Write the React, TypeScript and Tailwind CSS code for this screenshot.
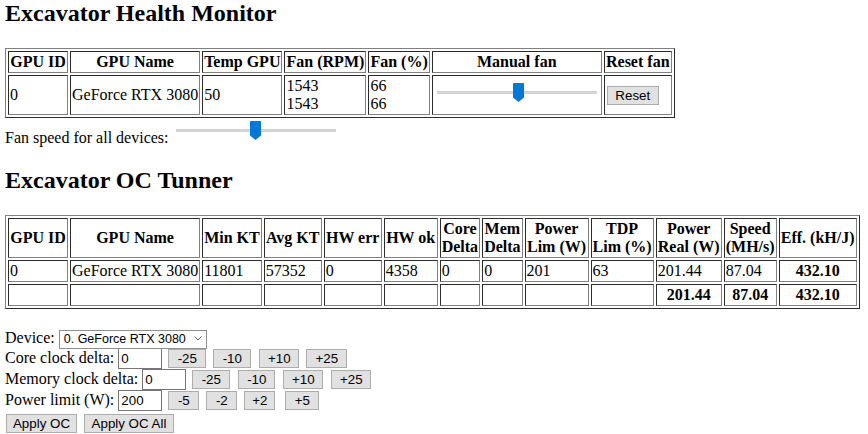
import type { ReactNode } from 'react';

const tableCls = 'border-separate border-spacing-[2px] border border-[grey] [border-style:outset]';
const thCls = 'border border-[grey] [border-style:inset] p-px font-bold text-center align-middle whitespace-nowrap';
const tdCls = 'border border-[grey] [border-style:inset] p-px text-left align-middle whitespace-nowrap';
const sans = "font-['Liberation_Sans',Arial,sans-serif] text-[13.33px] leading-[15px] text-black";

function Slider({ left }: { left: number }) {
  return (
    <div className="relative h-[19px] w-[160px]">
      <div className="absolute left-0 right-0 top-[8px] h-[3px] bg-[#d9d9d9] border-y border-[#cfcfcf]" />
      <svg className="absolute top-0" style={{ left }} width="11" height="19" viewBox="0 0 11 19">
        <path d="M1 0H10Q11 0 11 1V14.5L5.5 19L0 14.5V1Q0 0 1 0Z" fill="#0078d7" />
      </svg>
    </div>
  );
}

function Btn({ className, children }: { className?: string; children: ReactNode }) {
  return (
    <button
      type="button"
      className={`h-[19px] shrink-0 border border-[#adadad] bg-[#e1e1e1] text-center ${sans} ${className ?? ''}`}
    >
      {children}
    </button>
  );
}

function NumInput({ value, className }: { value: string; className?: string }) {
  return (
    <input
      type="text"
      readOnly
      value={value}
      className={`h-[21px] w-[44px] shrink-0 border border-[#767676] bg-white pl-[2px] ${sans} ${className ?? ''}`}
    />
  );
}

export default function App() {
  return (
    <div className="min-h-[434px] w-[868px] bg-white px-[5px] font-['Liberation_Serif','Times_New_Roman',serif] text-[16px] leading-[18px] text-black">
      {/* Health monitor */}
      <h2 className="mb-[21px] text-[24px] font-bold leading-[27px]">Excavator Health Monitor</h2>

      <table className={tableCls}>
        <thead>
          <tr>
            <th className={`${thCls} w-[60px]`}>GPU ID</th>
            <th className={`${thCls} w-[130px]`}>GPU Name</th>
            <th className={`${thCls} w-[80px]`}>Temp GPU</th>
            <th className={`${thCls} w-[82px]`}>Fan (RPM)</th>
            <th className={`${thCls} w-[61px]`}>Fan (%)</th>
            <th className={`${thCls} w-[170px]`}>Manual fan</th>
            <th className={`${thCls} w-[68px]`}>Reset fan</th>
          </tr>
        </thead>
        <tbody>
          <tr>
            <td className={tdCls}>0</td>
            <td className={tdCls}>GeForce RTX 3080</td>
            <td className={tdCls}>50</td>
            <td className={tdCls}>
              1543
              <br />
              1543
            </td>
            <td className={tdCls}>
              66
              <br />
              66
            </td>
            <td className={tdCls}>
              <div className="mb-[5px] ml-[3px]">
                <Slider left={76} />
              </div>
            </td>
            <td className={tdCls}>
              <Btn className="ml-px w-[52px]">Reset</Btn>
            </td>
          </tr>
        </tbody>
      </table>

      <div className="flex h-[29px] items-end">
        <span>Fan speed for all devices:</span>
        <div className="mb-[7px] ml-[7px]">
          <Slider left={74} />
        </div>
      </div>

      {/* OC tuner */}
      <h2 className="mb-[21px] mt-[20px] text-[24px] font-bold leading-[27px]">Excavator OC Tunner</h2>

      <table className={tableCls}>
        <thead>
          <tr>
            <th className={`${thCls} w-[60px]`}>GPU ID</th>
            <th className={`${thCls} w-[130px]`}>GPU Name</th>
            <th className={`${thCls} w-[58px]`}>Min KT</th>
            <th className={`${thCls} w-[58px]`}>Avg KT</th>
            <th className={`${thCls} w-[58px]`}>HW err</th>
            <th className={`${thCls} w-[54px]`}>HW ok</th>
            <th className={`${thCls} w-[40px]`}>
              Core
              <br />
              Delta
            </th>
            <th className={`${thCls} w-[40px]`}>
              Mem
              <br />
              Delta
            </th>
            <th className={`${thCls} w-[64px]`}>
              Power
              <br />
              Lim (W)
            </th>
            <th className={`${thCls} w-[62px]`}>
              TDP
              <br />
              Lim (%)
            </th>
            <th className={`${thCls} w-[66px]`}>
              Power
              <br />
              Real (W)
            </th>
            <th className={`${thCls} w-[53px]`}>
              Speed
              <br />
              (MH/s)
            </th>
            <th className={`${thCls} w-[78px]`}>Eff. (kH/J)</th>
          </tr>
        </thead>
        <tbody>
          <tr>
            <td className={tdCls}>0</td>
            <td className={tdCls}>GeForce RTX 3080</td>
            <td className={tdCls}>11801</td>
            <td className={tdCls}>57352</td>
            <td className={tdCls}>0</td>
            <td className={tdCls}>4358</td>
            <td className={tdCls}>0</td>
            <td className={tdCls}>0</td>
            <td className={tdCls}>201</td>
            <td className={tdCls}>63</td>
            <td className={tdCls}>201.44</td>
            <td className={tdCls}>87.04</td>
            <th className={thCls}>432.10</th>
          </tr>
          <tr>
            <td className={`${tdCls} h-[22px]`}></td>
            <td className={tdCls}></td>
            <td className={tdCls}></td>
            <td className={tdCls}></td>
            <td className={tdCls}></td>
            <td className={tdCls}></td>
            <td className={tdCls}></td>
            <td className={tdCls}></td>
            <td className={tdCls}></td>
            <td className={tdCls}></td>
            <th className={thCls}>201.44</th>
            <th className={thCls}>87.04</th>
            <th className={thCls}>432.10</th>
          </tr>
        </tbody>
      </table>

      {/* OC controls */}
      <div className="mt-[20px] flex flex-col">
        <div className="flex items-baseline">
          <span>Device:</span>
          <div className="relative ml-[4px] h-[19px] w-[148px]">
            <select
              className="h-full w-full appearance-none border border-[#8f8f8f] bg-white pl-[4px] font-['Liberation_Sans',Arial,sans-serif] text-[12.5px] leading-[15px] text-black"
              defaultValue="0"
            >
              <option value="0">0. GeForce RTX 3080</option>
            </select>
            <svg className="pointer-events-none absolute right-[5px] top-[7px]" width="8" height="5" viewBox="0 0 8 5">
              <path d="M0.5 0.5L4 4L7.5 0.5" fill="none" stroke="#606060" strokeWidth="1" />
            </svg>
          </div>
        </div>

        <div className="flex items-baseline">
          <span>Core clock delta:</span>
          <NumInput value="0" className="ml-[4px]" />
          <Btn className="ml-[6px] w-[38px]">-25</Btn>
          <Btn className="ml-[7px] w-[38px]">-10</Btn>
          <Btn className="ml-[8px] w-[40px]">+10</Btn>
          <Btn className="ml-[7px] w-[41px]">+25</Btn>
        </div>

        <div className="flex items-baseline">
          <span>Memory clock delta:</span>
          <NumInput value="0" className="ml-[4px]" />
          <Btn className="ml-[6px] w-[38px]">-25</Btn>
          <Btn className="ml-[8px] w-[37px]">-10</Btn>
          <Btn className="ml-[8px] w-[40px]">+10</Btn>
          <Btn className="ml-[8px] w-[40px]">+25</Btn>
        </div>

        <div className="flex items-baseline">
          <span>Power limit (W):</span>
          <NumInput value="200" className="ml-[4px]" />
          <Btn className="ml-[6px] w-[31px]">-5</Btn>
          <Btn className="ml-[7px] w-[31px]">-2</Btn>
          <Btn className="ml-[7px] w-[31px]">+2</Btn>
          <Btn className="ml-[10px] w-[34px]">+5</Btn>
        </div>

        <div className="mt-[3px] flex items-baseline">
          <Btn className="ml-px w-[71px]">Apply OC</Btn>
          <Btn className="ml-[7px] w-[90px]">Apply OC All</Btn>
        </div>
      </div>
    </div>
  );
}
